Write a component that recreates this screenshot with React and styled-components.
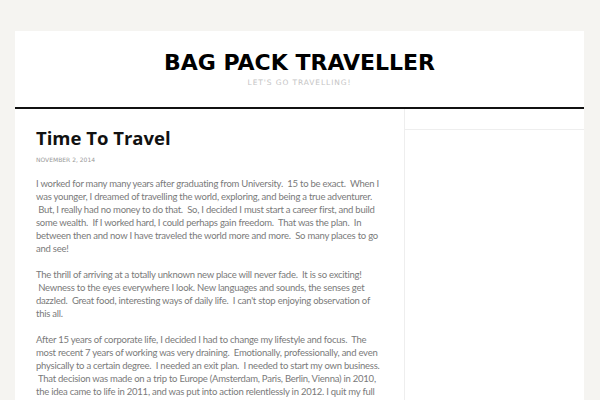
import React from "react";
import styled, { createGlobalStyle } from "styled-components";

const GlobalStyle = createGlobalStyle`
  html, body {
    margin: 0;
    padding: 0;
    background: #f5f4f1;
  }
  body {
    font-family: "Lato", "Open Sans", sans-serif;
  }
`;

const Page = styled.div`
  padding: 31px 16px 0 15px;
  height: 400px;
  box-sizing: border-box;
  overflow: hidden;
`;

const Wrap = styled.div`
  background: #fff;
  height: 400px;
`;

const Header = styled.header`
  height: 78px;
  border-bottom: 2px solid #111;
  text-align: center;
  padding-top: 20px;
  box-sizing: border-box;
`;

const SiteTitle = styled.h1`
  margin: 0;
  font-family: "DejaVu Sans", sans-serif;
  font-weight: 700;
  font-size: 22px;
  line-height: 24px;
  color: #000;
`;

const Tagline = styled.p`
  margin: 3px 0 0;
  font-family: "DejaVu Sans", sans-serif;
  font-size: 7.5px;
  letter-spacing: 0.9px;
  color: #c4c4c4;
  line-height: 10px;
`;

const Body = styled.div`
  display: flex;
`;

const Content = styled.main`
  width: 389px;
  padding: 16px 20px 0 21px;
  box-sizing: border-box;
`;

const PostTitle = styled.h2`
  margin: 0;
  font-family: "Open Sans", sans-serif;
  font-weight: 700;
  font-size: 18.5px;
  line-height: 26px;
  color: #111;
`;

const PostDate = styled.div`
  margin-top: 4px;
  font-family: "DejaVu Sans", sans-serif;
  font-size: 6px;
  line-height: 9px;
  color: #999;
  text-transform: uppercase;
`;

const Paragraph = styled.p`
  margin: 0 0 13px 0;
  font-size: 9.5px;
  line-height: 13px;
  letter-spacing: -0.24px;
  color: #7a7a7a;

  &:first-of-type {
    margin-top: 13px;
  }
`;

const Sidebar = styled.aside`
  flex: 1;
  border-left: 1px solid #eee;
  height: 300px;
`;

const SidebarTop = styled.div`
  height: 20px;
  border-bottom: 1px solid #eee;
`;

const S = ". \u00a0";

export default function App() {
  return (
    <>
      <GlobalStyle />
      <Page>
        <Wrap>
          <Header>
            <SiteTitle>BAG PACK TRAVELLER</SiteTitle>
            <Tagline>LET'S GO TRAVELLING!</Tagline>
          </Header>
          <Body>
            <Content>
              <PostTitle>Time To Travel</PostTitle>
              <PostDate>November 2, 2014</PostDate>
              <Paragraph>
                {`I worked for many many years after graduating from University${S}15 to be exact${S}When I was younger, I dreamed of travelling the world, exploring, and being a true adventurer${S}But, I really had no money to do that${S}So, I decided I must start a career first, and build some wealth${S}If I worked hard, I could perhaps gain freedom${S}That was the plan${S}In between then and now I have traveled the world more and more${S}So many places to go and see!`}
              </Paragraph>
              <Paragraph>
                {`The thrill of arriving at a totally unknown new place will never fade${S}It is so exciting! \u00a0Newness to the eyes everywhere I look. New languages and sounds, the senses get dazzled${S}Great food, interesting ways of daily life${S}I can't stop enjoying observation of this all.`}
              </Paragraph>
              <Paragraph>
                {`After 15 years of corporate life, I decided I had to change my lifestyle and focus${S}The most recent 7 years of working was very draining${S}Emotionally, professionally, and even physically to a certain degree${S}I needed an exit plan${S}I needed to start my own business${S}That decision was made on a trip to Europe (Amsterdam, Paris, Berlin, Vienna) in 2010, the idea came to life in 2011, and was put into action relentlessly in 2012. I quit my full time job.`}
              </Paragraph>
            </Content>
            <Sidebar>
              <SidebarTop />
            </Sidebar>
          </Body>
        </Wrap>
      </Page>
    </>
  );
}
